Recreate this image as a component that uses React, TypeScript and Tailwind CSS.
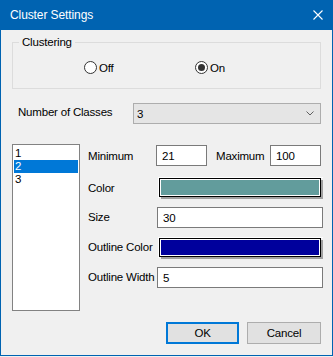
import React from "react";

const font = { fontFamily: '"Liberation Sans", Arial, sans-serif' };

function Radio({ label, checked }: { label: string; checked?: boolean }) {
  return (
    <div className="flex items-center gap-[2px] h-[13px]">
      <span className="w-[13px] h-[13px] rounded-full border border-[#333] bg-white flex items-center justify-center">
        {checked && <span className="w-[7px] h-[7px] rounded-full bg-[#333]" />}
      </span>
      <span className="leading-[14px]">{label}</span>
    </div>
  );
}

function ColorSwatch({ color }: { color: string }) {
  return (
    <div className="border-t border-l border-t-white border-l-white w-[165px] h-[21px]">
      <div className="border border-black w-[162px] h-[19px] shadow-[2px_2px_0_#a0a0a0]">
        <div className="border border-white w-full h-full" style={{ backgroundColor: color }} />
      </div>
    </div>
  );
}

function Field({ value, w }: { value: string; w: string }) {
  return (
    <div className={`h-[21px] border border-[#7a7a7a] bg-white flex items-center pl-[5px] leading-[14px] ${w}`}>
      {value}
    </div>
  );
}

export default function App() {
  return (
    <div
      className="w-[333px] h-[357px] bg-[#f0f0f0] text-[11.5px] tracking-[-0.2px] text-black whitespace-nowrap"
      style={font}
    >
      {/* Title bar */}
      <div className="h-[30px] bg-[#0063b1] flex items-center justify-between pl-[10px] pr-[10px] text-white">
        <span className="text-[12px] tracking-[-0.1px] leading-[16px]">Cluster Settings</span>
        <svg width="10" height="10" viewBox="0 0 10 10">
          <path d="M0.5 0.5 L9.5 9.5 M9.5 0.5 L0.5 9.5" stroke="white" strokeWidth="1.1" />
        </svg>
      </div>

      <div className="h-[326px] border-x border-b border-[#0063b1] flex flex-col">
        {/* Clustering group */}
        <div className="relative mt-[12px] ml-[11px] w-[309px] h-[47px] border border-[#dcdcdc] pt-[18px] pl-[71px] flex">
          <span className="absolute -top-[9px] left-[6px] px-[3px] bg-[#f0f0f0] leading-[16px]">Clustering</span>
          <div className="w-[111px]">
            <Radio label="Off" />
          </div>
          <Radio label="On" checked />
        </div>

        {/* Number of classes */}
        <div className="flex mt-[14px]">
          <span className="ml-[17px] w-[115px] leading-[16px] mt-[1px]">Number of Classes</span>
          <div className="w-[188px] h-[21px] border border-[#adadad] bg-[#e5e5e5] flex items-center justify-between pl-[3px] pr-[6px] leading-[14px]">
            <span>3</span>
            <svg width="8" height="5" viewBox="0 0 8 5">
              <path d="M0.5 0.5 L4 4 L7.5 0.5" stroke="#606060" fill="none" strokeWidth="1" />
            </svg>
          </div>
        </div>

        {/* Classes + properties */}
        <div className="flex mt-[20px] h-[167px]">
          <div className="ml-[11px] w-[68px] h-[167px] border border-[#828282] bg-white pt-[2px] px-[1px] leading-[13px]">
            <div className="h-[13px] pl-[1px]">1</div>
            <div className="h-[13px] pl-[1px] bg-[#0078d7] text-white">2</div>
            <div className="h-[13px] pl-[1px]">3</div>
          </div>

          <div className="ml-[8px] flex flex-col pt-[1px]">
            <div className="flex items-center">
              <span className="w-[68px] pt-[3px]">Minimum</span>
              <Field value="21" w="w-[51px]" />
              <span className="ml-[9px] w-[54px] pt-[3px]">Maximum</span>
              <Field value="100" w="w-[51px]" />
            </div>

            <div className="flex items-center mt-[11px]">
              <span className="w-[70px] pt-[3px]">Color</span>
              <ColorSwatch color="#629c9c" />
            </div>

            <div className="flex items-center mt-[9px]">
              <span className="w-[69px] pt-[1px]">Size</span>
              <Field value="30" w="w-[166px]" />
            </div>

            <div className="flex items-center mt-[9px]">
              <span className="w-[70px] pt-[1px]">Outline Color</span>
              <ColorSwatch color="#00009c" />
            </div>

            <div className="flex items-center mt-[9px]">
              <span className="w-[69px] pt-[1px]">Outline Width</span>
              <Field value="5" w="w-[166px]" />
            </div>
          </div>
        </div>

        {/* Buttons */}
        <div className="flex justify-end mt-[11px] mr-[11px] gap-[8px]">
          <button className="w-[73px] h-[22px] border-2 border-[#0078d7] bg-[#e1e1e1] leading-[14px]">OK</button>
          <button className="w-[74px] h-[22px] border border-[#adadad] bg-[#e1e1e1] leading-[14px]">Cancel</button>
        </div>
      </div>
    </div>
  );
}
